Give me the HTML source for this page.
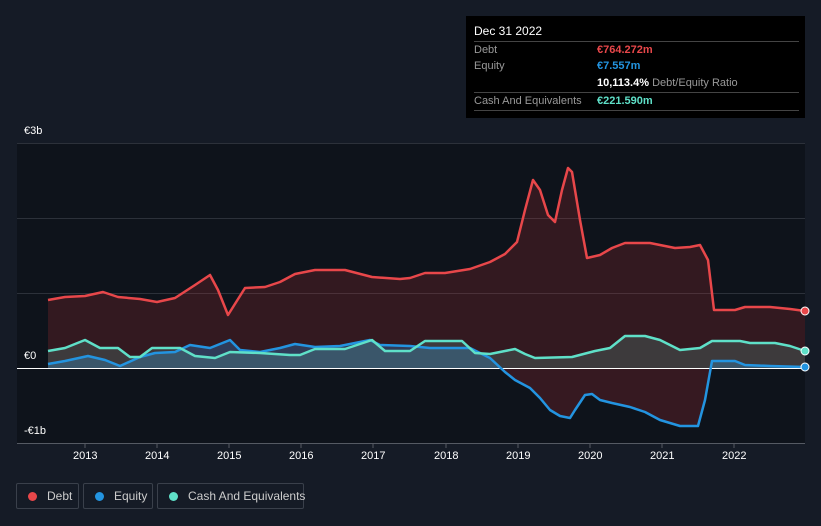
<!DOCTYPE html>
<html><head><style>
body{margin:0;width:821px;height:526px;background:#151b26;font-family:"Liberation Sans",sans-serif;overflow:hidden;position:relative}
.tt{position:absolute;left:466px;top:16px;width:339px;height:102px;background:#000;color:#fff;font-size:11px}
.tt .r{position:absolute;left:8px;right:6px;border-top:1px solid #444;height:17px;line-height:17px;color:#999}
.lg{position:absolute;top:483px;height:26px;border:1px solid #3a404b;border-radius:2px;color:#ccc;font-size:12px;line-height:25px;box-sizing:border-box;white-space:nowrap}
.lg i{display:inline-block;width:9px;height:9px;border-radius:50%;margin:0 10px 0 11px;vertical-align:-1px}
.ax{position:absolute;color:#fff;font-size:11px}
</style></head><body>
<svg width="821" height="526" style="position:absolute;left:0;top:0">
<defs><clipPath id="pos"><rect x="0" y="0" width="821" height="368"/></clipPath><clipPath id="neg"><rect x="0" y="368" width="821" height="200"/></clipPath></defs>
<rect x="17" y="143" width="788" height="300" fill="#0e131b"/>
<g stroke="#2c313a" stroke-width="1"><line x1="17" y1="143.5" x2="805" y2="143.5"/><line x1="17" y1="218.5" x2="805" y2="218.5"/><line x1="17" y1="293.5" x2="805" y2="293.5"/></g>
<line x1="17" y1="443.5" x2="805" y2="443.5" stroke="#555a63"/>
<g stroke="#555a63"><line x1="85" y1="443" x2="85" y2="448"/><line x1="157" y1="443" x2="157" y2="448"/><line x1="229" y1="443" x2="229" y2="448"/><line x1="301" y1="443" x2="301" y2="448"/><line x1="373" y1="443" x2="373" y2="448"/><line x1="446" y1="443" x2="446" y2="448"/><line x1="518" y1="443" x2="518" y2="448"/><line x1="590" y1="443" x2="590" y2="448"/><line x1="662" y1="443" x2="662" y2="448"/><line x1="734" y1="443" x2="734" y2="448"/></g>
<polygon fill="rgba(200,50,55,0.2)" points="48,368 48,300 65,297 85,296 103,292 118,297 140,299 157,302 175,298 195,285 210,275 218,290 228,315 245,288 265,287 280,282 295,274 315,270 345,270 372,277 400,279 410,278 425,273 445,273 470,269 490,262 505,254 517,242 525,210 533,180 540,190 548,215 555,222 562,190 568,168 572,172 580,220 587,258 600,255 612,248 625,243 650,243 675,248 690,247 700,245 708,260 714,310 735,310 745,307 770,307 790,309 805,311 805,368"/>
<polygon clip-path="url(#neg)" fill="rgba(200,50,55,0.22)" points="48,368 48,364 65,361 88,356 105,360 120,366 140,357 155,353 175,352 190,345 210,348 230,340 240,350 260,352 280,348 295,344 315,347 340,346 370,340 380,345 410,346 430,348 470,348 490,358 505,372 515,380 530,388 540,398 550,410 560,416 570,418 575,410 585,395 592,394 600,400 612,403 630,407 645,412 660,420 680,426 698,426 705,400 712,361 735,361 745,365 770,366 805,367 805,368"/>
<polygon clip-path="url(#pos)" fill="rgba(40,140,220,0.3)" points="48,368 48,364 65,361 88,356 105,360 120,366 140,357 155,353 175,352 190,345 210,348 230,340 240,350 260,352 280,348 295,344 315,347 340,346 370,340 380,345 410,346 430,348 470,348 490,358 505,372 515,380 530,388 540,398 550,410 560,416 570,418 575,410 585,395 592,394 600,400 612,403 630,407 645,412 660,420 680,426 698,426 705,400 712,361 735,361 745,365 770,366 805,367 805,368"/>
<polygon fill="rgba(110,210,190,0.18)" points="48,368 48,351 65,348 85,340 100,348 118,348 130,357 140,357 152,348 180,348 195,356 215,358 230,352 260,353 290,355 300,355 315,349 345,349 372,340 385,351 410,351 425,341 462,341 475,353 490,354 515,349 525,354 535,358 572,357 595,351 610,348 625,336 645,336 660,340 680,350 700,348 712,341 740,341 750,343 775,343 790,346 805,351 805,368"/>
<line x1="17" y1="368.5" x2="805" y2="368.5" stroke="#fff" stroke-width="1"/>
<g fill="none" stroke-width="2.5" stroke-linejoin="round">
<polyline stroke="#e8474a" points="48,300 65,297 85,296 103,292 118,297 140,299 157,302 175,298 195,285 210,275 218,290 228,315 245,288 265,287 280,282 295,274 315,270 345,270 372,277 400,279 410,278 425,273 445,273 470,269 490,262 505,254 517,242 525,210 533,180 540,190 548,215 555,222 562,190 568,168 572,172 580,220 587,258 600,255 612,248 625,243 650,243 675,248 690,247 700,245 708,260 714,310 735,310 745,307 770,307 790,309 805,311"/>
<polyline stroke="#2394e0" points="48,364 65,361 88,356 105,360 120,366 140,357 155,353 175,352 190,345 210,348 230,340 240,350 260,352 280,348 295,344 315,347 340,346 370,340 380,345 410,346 430,348 470,348 490,358 505,372 515,380 530,388 540,398 550,410 560,416 570,418 575,410 585,395 592,394 600,400 612,403 630,407 645,412 660,420 680,426 698,426 705,400 712,361 735,361 745,365 770,366 805,367"/>
<polyline stroke="#5fe0c8" points="48,351 65,348 85,340 100,348 118,348 130,357 140,357 152,348 180,348 195,356 215,358 230,352 260,353 290,355 300,355 315,349 345,349 372,340 385,351 410,351 425,341 462,341 475,353 490,354 515,349 525,354 535,358 572,357 595,351 610,348 625,336 645,336 660,340 680,350 700,348 712,341 740,341 750,343 775,343 790,346 805,351"/>
</g>
<circle cx="805" cy="311" r="4" fill="#e8474a" stroke="#fff" stroke-width="1"/>
<circle cx="805" cy="351" r="4" fill="#5fe0c8" stroke="#fff" stroke-width="1"/>
<circle cx="805" cy="367" r="4" fill="#2394e0" stroke="#fff" stroke-width="1"/>
</svg>
<div class="ax" style="left:24px;top:125px">€3b</div>
<div class="ax" style="left:24px;top:350px">€0</div>
<div class="ax" style="left:24px;top:425px">-€1b</div>
<div class="ax" style="left:73px;top:450px">2013</div><div class="ax" style="left:145px;top:450px">2014</div><div class="ax" style="left:217px;top:450px">2015</div><div class="ax" style="left:289px;top:450px">2016</div><div class="ax" style="left:361px;top:450px">2017</div><div class="ax" style="left:434px;top:450px">2018</div><div class="ax" style="left:506px;top:450px">2019</div><div class="ax" style="left:578px;top:450px">2020</div><div class="ax" style="left:650px;top:450px">2021</div><div class="ax" style="left:722px;top:450px">2022</div>
<div class="tt">
<div style="position:absolute;left:8px;top:8px;font-size:12px">Dec 31 2022</div>
<div class="r" style="top:25px">Debt<span style="position:absolute;left:123px;color:#e8474a;font-weight:bold">€764.272m</span></div>
<div class="r" style="top:42px;border-top:0;border-bottom:0">Equity<span style="position:absolute;left:123px;color:#2394e0;font-weight:bold">€7.557m</span></div>
<div class="r" style="top:59px;border-top:0"><span style="position:absolute;left:123px;color:#fff;font-weight:bold;white-space:nowrap">10,113.4% <span style="color:#999;font-weight:normal">Debt/Equity Ratio</span></span></div>
<div class="r" style="top:76px;border-bottom:1px solid #444">Cash And Equivalents<span style="position:absolute;left:123px;color:#5fe0c8;font-weight:bold">€221.590m</span></div>
</div>
<div class="lg" style="left:16px;width:63px"><i style="background:#e8474a"></i>Debt</div>
<div class="lg" style="left:83px;width:70px"><i style="background:#2394e0"></i>Equity</div>
<div class="lg" style="left:157px;width:147px"><i style="background:#5fe0c8"></i>Cash And Equivalents</div>
</body></html>
